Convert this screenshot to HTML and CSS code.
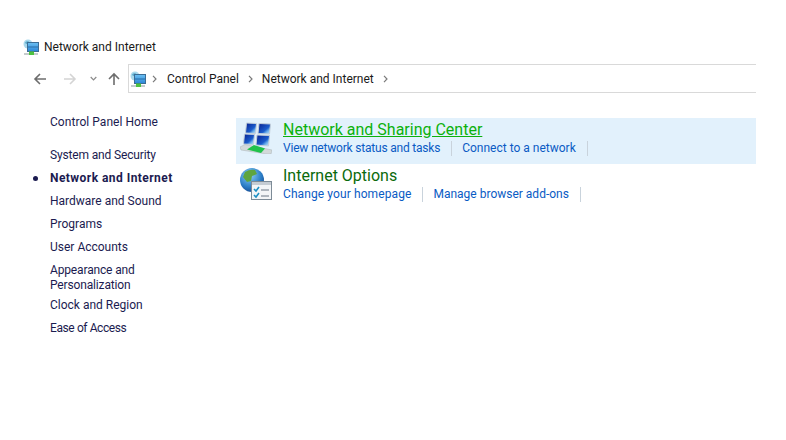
FILE: index.html
```html
<!DOCTYPE html>
<html lang="en">
<head>
<meta charset="utf-8">
<title>Network and Internet</title>
<link rel="stylesheet" href="styles.css">
</head>
<body>
<svg class="defs" width="0" height="0" aria-hidden="true">
  <defs>
    <linearGradient id="screen" x1="0" y1="0" x2="0" y2="1"><stop offset="0" stop-color="#6cc0f2"/><stop offset="1" stop-color="#2a86d8"/></linearGradient>
    <linearGradient id="pane" x1="0" y1="0" x2="1" y2="1"><stop offset="0" stop-color="#082090"/><stop offset="0.6" stop-color="#1a5ccc"/><stop offset="0.75" stop-color="#6aaeea"/><stop offset="1" stop-color="#d6ecfb"/></linearGradient>
    <radialGradient id="globe" cx="0.4" cy="0.3" r="0.8"><stop offset="0" stop-color="#8fd0f5"/><stop offset="0.6" stop-color="#2c7fc8"/><stop offset="1" stop-color="#123f86"/></radialGradient>
    <symbol id="net-small" viewBox="0 0 16 16">
      <circle cx="5" cy="5" r="4.500" fill="#a9d8ec"/>
      <path d="M2 3.500q2-2 4-1l-1 2-2 .5z" fill="#5aa9c9"/>
      <rect x="4.500" y="3.500" width="11" height="9" fill="url(#screen)" stroke="#3b6d96"/>
      <rect x="5" y="7.500" width="10" height="1" fill="#2a6ea8"/>
      <rect x="1" y="14" width="14" height="2" fill="#c5cccd"/>
      <rect x="6" y="12.500" width="5" height="3.500" fill="#4dc23f"/>
    </symbol>
  </defs>
</svg>
<header class="title-row">
  <svg class="icon-16" aria-hidden="true"><use href="#net-small"/></svg>
  <span>Network and Internet</span>
</header>
<nav class="nav-row">
  <div class="nav-buttons">
    <svg class="nav-arrow" viewBox="0 0 14 14" aria-hidden="true"><path d="M13 7H2M7 2 2 7l5 5" fill="none" stroke="#6d6d6d" stroke-width="1.6"/></svg>
    <svg class="nav-arrow" viewBox="0 0 14 14" aria-hidden="true"><path d="M1 7h11M7 2l5 5-5 5" fill="none" stroke="#d4d4d4" stroke-width="1.6"/></svg>
    <svg class="nav-caret" viewBox="0 0 7 5" aria-hidden="true"><path d="M.7 1 3.500 3.800 6.300 1" fill="none" stroke="#8a8a8a" stroke-width="1.2"/></svg>
    <svg class="nav-arrow" viewBox="0 0 14 14" aria-hidden="true"><path d="M7 13V2M2 7l5-5 5 5" fill="none" stroke="#6d6d6d" stroke-width="1.6"/></svg>
  </div>
  <div class="address">
    <svg class="icon-16" aria-hidden="true"><use href="#net-small"/></svg>
    <svg class="chev" viewBox="0 0 5 8" aria-hidden="true"><path d="M1 .8 4 4 1 7.200" fill="none" stroke="#7a7a7a" stroke-width="1.2"/></svg>
    <span>Control Panel</span>
    <svg class="chev" viewBox="0 0 5 8" aria-hidden="true"><path d="M1 .8 4 4 1 7.200" fill="none" stroke="#7a7a7a" stroke-width="1.2"/></svg>
    <span>Network and Internet</span>
    <svg class="chev" viewBox="0 0 5 8" aria-hidden="true"><path d="M1 .8 4 4 1 7.200" fill="none" stroke="#7a7a7a" stroke-width="1.2"/></svg>
  </div>
</nav>
<div class="content">
  <aside class="sidebar">
    <a class="side-link home">Control Panel Home</a>
    <a class="side-link narrow">System and Security</a>
    <a class="side-link current">Network and Internet</a>
    <a class="side-link">Hardware and Sound</a>
    <a class="side-link">Programs</a>
    <a class="side-link">User Accounts</a>
    <a class="side-link two-line narrow">Appearance and Personalization</a>
    <a class="side-link after-two">Clock and Region</a>
    <a class="side-link narrower">Ease of Access</a>
  </aside>
  <main class="main">
    <section class="group hot">
      <svg class="icon-32" viewBox="0 0 32 32" aria-hidden="true">
        <path d="M6.500 1 16.500 1.500 15.500 11.500 5.500 11z" fill="url(#pane)" stroke="#c3cfda"/>
        <path d="M19 1.500 30.500 2 29.500 12 18 11.500z" fill="url(#pane)" stroke="#c3cfda"/>
        <path d="M4.500 12 14.500 12.500 13.500 22.500 3.500 22z" fill="url(#pane)" stroke="#c3cfda"/>
        <path d="M17 13 29.500 13.500 28.500 24 16 23z" fill="url(#pane)" stroke="#c3cfda"/>
        <path d="M0 25 5 22.500 32 28 31 32 27 32 1 28z" fill="#d3d9da" stroke="#a9b2b4" stroke-width=".5"/>
        <path d="M7 27.500 14 23 25 26.500 21 31z" fill="#1fc24a"/>
      </svg>
      <div class="group-text">
        <a class="group-title">Network and Sharing Center</a>
        <div class="tasks">
          <a class="task tight">View network status and tasks</a>
          <a class="task">Connect to a network</a>
        </div>
      </div>
    </section>
    <section class="group">
      <svg class="icon-32" viewBox="0 0 32 32" aria-hidden="true">
        <circle cx="12" cy="12" r="12" fill="url(#globe)"/>
        <path d="M5 4q5-3 10-2l2 4-5 2-1 5-4 1-4-5z" fill="#5fa53f"/>
        <path d="M13 14l6 1 1 4-5 4-2-4z" fill="#4f9a3a"/>
        <rect x="11.500" y="13.500" width="20" height="18" fill="#f3f5f7" stroke="#7d8b97"/>
        <rect x="12" y="14" width="19" height="3" fill="#c5ccd3"/>
        <path d="M14 21l2 2 3-4M14 27l2 2 3-4" fill="none" stroke="#1d8fc4" stroke-width="1.6"/>
        <path d="M21 22h8M21 28h8" stroke="#6a7784" stroke-width="1"/>
      </svg>
      <div class="group-text">
        <a class="group-title">Internet Options</a>
        <div class="tasks">
          <a class="task loose">Change your homepage</a>
          <a class="task">Manage browser add-ons</a>
        </div>
      </div>
    </section>
  </main>
</div>
</body>
</html>
```
FILE: styles.css
```css
* { box-sizing: border-box; }
html, body { margin: 0; height: 100%; }
body {
  background: #fff;
  color: #1a1a1a;
  font-family: Roboto, "Open Sans", sans-serif;
  font-size: 12px;
  overflow: hidden;
  padding: 38px 30px 0 23px;
}
.defs { position: absolute; }
.icon-16 { width: 16px; height: 16px; flex: none; }
.title-row { display: flex; align-items: center; gap: 5px; height: 17px; }
.nav-row { display: flex; height: 29px; margin-top: 9px; }
.nav-buttons { display: flex; align-items: center; width: 105px; padding: 0 0 0 10px; }
.nav-arrow { width: 14px; height: 14px; flex: none; }
.nav-arrow + .nav-arrow { margin-left: 16px; }
.nav-caret { width: 7px; height: 5px; margin: 0 10px 0 13px; flex: none; }
.address {
  flex: 1;
  display: flex;
  align-items: center;
  border: 1px solid #d9d9d9;
  border-right: 0;
  padding-left: 1px;
}
.chev { width: 5px; height: 8px; margin: 0 10px 0 6px; flex: none; }
.address span + .chev { margin-left: 9px; margin-right: 9px; }
.content { display: flex; margin-top: 21px; }
.sidebar { width: 213px; padding-left: 27px; color: #1b1b50; display: flex; flex-direction: column; }
.side-link { display: block; line-height: 15px; margin-top: 8px; position: relative; }
.home { margin-top: 1px; margin-bottom: 10px; letter-spacing: .05px; }
.narrow { letter-spacing: -.15px; }
.narrower { letter-spacing: -.4px; }
.current { font-weight: 700; letter-spacing: .45px; }
.current::before {
  content: "";
  position: absolute;
  left: -17px;
  top: 5px;
  width: 5px;
  height: 5px;
  border-radius: 50%;
  background: #1b1b50;
}
.two-line { width: 100px; }
.after-two { margin-top: 5px; }
.main { flex: 1; padding-top: 4px; }
.group { display: flex; height: 46px; padding: 2px 0 0 4px; }
.group.hot { background: #e2f1fc; }
.icon-32 { width: 32px; height: 32px; flex: none; margin-top: 2px; }
.group-text { margin-left: 11px; }
.group-title { display: block; font-size: 16px; line-height: 19px; color: #0b6a0b; }
.hot .group-title { color: #0cb10c; text-decoration: underline; }
.tasks { display: flex; margin-top: 2px; color: #0a5bc4; line-height: 15px; }
.task { padding-right: 11px; margin-right: 10px; border-right: 1px solid #c9d3dc; }
.tight { letter-spacing: -.2px; }
.loose { letter-spacing: .1px; }
```
